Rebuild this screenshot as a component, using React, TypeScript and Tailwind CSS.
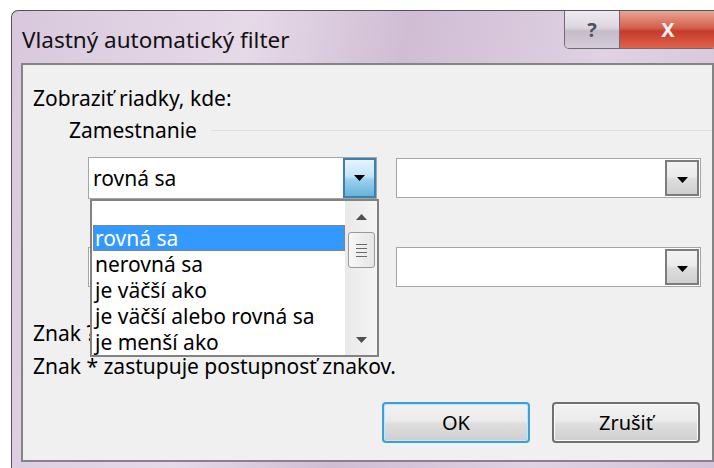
import type { ReactNode } from "react";

const options = ["", "rovná sa", "nerovná sa", "je väčší ako", "je väčší alebo rovná sa", "je menší ako"];

function Arrow({ className = "" }: { className?: string }) {
  return (
    <svg width="11" height="6" viewBox="0 0 11 6" className={className} aria-hidden="true">
      <path d="M0 0h11L5.5 6z" fill="currentColor" />
    </svg>
  );
}

function ComboBox({ value, active, className = "" }: { value?: string; active?: boolean; className?: string }) {
  return (
    <div className={`flex border border-[#a5a5a5] bg-white ${className}`}>
      <div className="flex flex-1 items-center pl-[4px] text-[21px] text-black">{value}</div>
      {active ? (
        <div className="flex w-[33px] items-center justify-center border-2 border-[#3c7fb1] bg-[linear-gradient(#e6f4fc,#c4e5f6_45%,#98d1ef_55%,#68b3db)] text-black">
          <Arrow />
        </div>
      ) : (
        <div className="m-[1px] flex w-[34px] items-center justify-center border-2 border-[#7c7c7c] bg-[linear-gradient(#f2f2f2,#ebebeb_45%,#dddddd_55%,#cfcfcf)] pt-[3px] text-black">
          <Arrow />
        </div>
      )}
    </div>
  );
}

function DialogButton({ children, primary }: { children: ReactNode; primary?: boolean }) {
  return (
    <div
      className={`flex h-[41px] w-[148px] items-center justify-center rounded-[4px] border-2 bg-[linear-gradient(#f2f2f2,#ebebeb_45%,#dddddd_55%,#cfcfcf)] text-[20px] text-black ${
        primary ? "border-[#3c9fd8] shadow-[inset_0_0_0_1px_#bfe6f9]" : "border-[#707070] shadow-[inset_0_0_0_1px_#fbfbfb]"
      }`}
    >
      {children}
    </div>
  );
}

function OperatorList() {
  return (
    <div className="absolute left-[67px] top-[134px] flex h-[158px] w-[289px] border-2 border-[#828282] bg-white">
      <div className="flex-1 pl-[1px] text-[21px] leading-[24px]">
        {options.map((label, i) =>
          i === 0 ? (
            <div key={i} className="h-[24px]" />
          ) : i === 1 ? (
            <div
              key={i}
              className="flex h-[26px] items-center border border-dotted border-[#c4731f] bg-[#3399ff] pl-[1px] text-white"
            >
              {label}
            </div>
          ) : (
            <div key={i} className="flex h-[26px] items-center pl-[2px] text-black">
              {label}
            </div>
          ),
        )}
      </div>
      {/* scrollbar */}
      <div className="flex w-[32px] flex-col items-center bg-[linear-gradient(90deg,#e9e9e9,#f5f5f5)]">
        <Arrow className="mt-[13px] rotate-180 text-[#505050]" />
        <div className="mt-[12px] flex h-[36px] w-[27px] flex-col items-center justify-center gap-[3px] rounded-[3px] border border-[#9a9a9a] bg-[linear-gradient(90deg,#f7f7f7,#e6e6e6)]">
          <div className="h-[1px] w-[11px] bg-[#6a6a6a]" />
          <div className="h-[1px] w-[11px] bg-[#6a6a6a]" />
          <div className="h-[1px] w-[11px] bg-[#6a6a6a]" />
          <div className="h-[1px] w-[11px] bg-[#6a6a6a]" />
        </div>
        <Arrow className="mt-auto mb-[12px] text-[#505050]" />
      </div>
    </div>
  );
}

export default function App() {
  return (
    <div className="h-[468px] w-[714px] overflow-hidden bg-white font-['Noto_Sans',sans-serif]">
      <div className="ml-[11px] mt-[10px] flex h-[458px] w-[720px] flex-col rounded-tl-[7px] border-t border-l border-[#555] bg-[linear-gradient(100deg,#d9c8dd,#e6d9e8_30%,#d0bdd4_50%,#e0d1e3_75%,#d4c2d8)]">
        {/* title bar */}
        <div className="flex h-[52px] shrink-0 items-start">
          <div className="pl-[10px] pt-[12px] text-[22.5px] text-[#111]">Vlastný automatický filter</div>
          <div className="ml-auto mr-[14px] flex h-[38px] overflow-hidden rounded-b-[5px] border border-t-0 border-[#6f6a74]">
            <div className="flex w-[55px] items-center justify-center border-r border-[#6f6a74] bg-[linear-gradient(#efeaf0,#ddd6df_45%,#c6bcc9_55%,#d4ccd8)] text-[20px] font-bold text-[#4d5366]">
              ?
            </div>
            <div className="flex w-[96px] items-center justify-center bg-[linear-gradient(#e8a595,#d5604f_45%,#c63b2b_55%,#e0624c)] text-[20px] font-bold text-[#f4f0f0]">
              X
            </div>
          </div>
        </div>
        {/* client area */}
        <div className="relative ml-[9px] h-[399px] w-[693px] border-2 border-[#848484] bg-[#f0f0f0] pl-[10px] text-[21px] leading-[26px] text-black">
          <div className="mt-[20px]">Zobraziť riadky, kde:</div>
          <div className="mt-[6px] flex items-center pl-[36px]">
            <span>Zamestnanie</span>
            <div className="ml-[14px] h-[1px] flex-1 bg-[#d8e0e6]" />
          </div>
          <div className="mt-[14px] flex items-center pl-[55px]">
            <ComboBox value="rovná sa" active className="h-[42px] w-[289px]" />
            <ComboBox className="ml-[19px] h-[40px] w-[305px]" />
          </div>
          <div className="mt-[48px] flex items-center pl-[55px]">
            <ComboBox className="h-[40px] w-[289px]" />
            <ComboBox className="ml-[19px] h-[40px] w-[305px]" />
          </div>
          <div className="mt-[35px] leading-[22px]">Znak ? zastupuje jeden znak.</div>
          <div className="mt-[11px] leading-[22px]">Znak * zastupuje postupnosť znakov.</div>
          <div className="mt-[25px] flex gap-[22px] pl-[349px]">
            <DialogButton primary>OK</DialogButton>
            <DialogButton>Zrušiť</DialogButton>
          </div>
          <OperatorList />
        </div>
      </div>
    </div>
  );
}
